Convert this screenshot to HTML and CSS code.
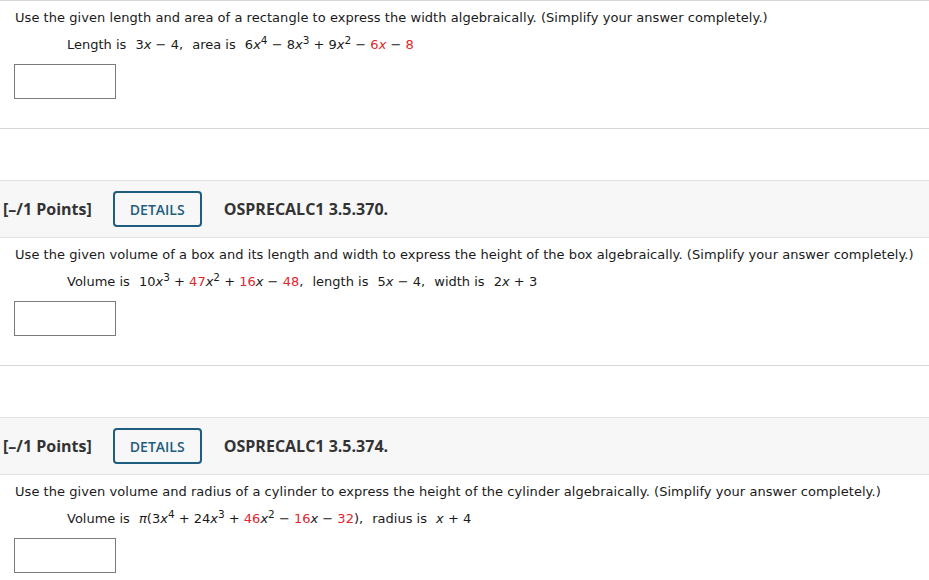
FILE: index.html
```html
<!DOCTYPE html>
<html>
<head>
<meta charset="utf-8">
<link rel="stylesheet" href="styles.css">
</head>
<body>
<div class="page">
  <div class="content first">
    <p class="prompt">Use the given length and area of a rectangle to express the width algebraically. (Simplify your answer completely.)</p>
    <p class="given">Length is <span class="m">3<i>x</i> − 4</span><span class="comma">,</span> area is <span class="m">6<i>x</i><sup>4</sup> − 8<i>x</i><sup>3</sup> + 9<i>x</i><sup>2</sup> − <span class="r">6</span><i class="r">x</i> − <span class="r">8</span></span></p>
    <div class="answer"></div>
  </div>

  <div class="header">
    <span class="points">[–/1 Points]</span>
    <span class="details">DETAILS</span>
    <span class="code">OSPRECALC1 3.5.370.</span>
  </div>
  <div class="content">
    <p class="prompt">Use the given volume of a box and its length and width to express the height of the box algebraically. (Simplify your answer completely.)</p>
    <p class="given">Volume is <span class="m">10<i>x</i><sup>3</sup> + <span class="r">47</span><i>x</i><sup>2</sup> + <span class="r">16</span><i>x</i> − <span class="r">48</span></span><span class="comma">,</span> length is <span class="m">5<i>x</i> − 4</span><span class="comma">,</span> width is <span class="m">2<i>x</i> + 3</span></p>
    <div class="answer"></div>
  </div>

  <div class="header">
    <span class="points">[–/1 Points]</span>
    <span class="details">DETAILS</span>
    <span class="code">OSPRECALC1 3.5.374.</span>
  </div>
  <div class="content">
    <p class="prompt">Use the given volume and radius of a cylinder to express the height of the cylinder algebraically. (Simplify your answer completely.)</p>
    <p class="given">Volume is <span class="m"><i>π</i>(3<i>x</i><sup>4</sup> + 24<i>x</i><sup>3</sup> + <span class="r">46</span><i>x</i><sup>2</sup> − <span class="r">16</span><i>x</i> − <span class="r">32</span>)</span><span class="comma">,</span> radius is <span class="m"><i>x</i> + 4</span></p>
    <div class="answer"></div>
  </div>
</div>
</body>
</html>
```

FILE: styles.css
```css
html, body {
  margin: 0;
  padding: 0;
  background: #ffffff;
}

.page {
  font-family: "DejaVu Sans", Verdana, sans-serif;
  font-size: 13px;
  color: #1a1a1a;
}

.content {
  padding: 8px 0 29px 14px;
  border-bottom: 1px solid #d6d6d6;
  margin-bottom: 51px;
}

.content.first {
  border-top: 1px solid #d6d6d6;
}

.content:last-child {
  border-bottom: none;
  margin-bottom: 0;
}

.prompt {
  margin: 0 0 9px 1px;
  line-height: 18px;
  white-space: nowrap;
  letter-spacing: 0.05px;
}

.given {
  margin: 0 0 0 53px;
  line-height: 18px;
  white-space: nowrap;
}

.m {
  margin: 0 0 0 5px;
}

.m i {
  font-style: italic;
}

.m sup {
  font-size: 10.5px;
  line-height: 0;
  vertical-align: 5px;
}

.comma {
  margin-right: 5px;
}

.r {
  color: #e0262e;
}

.answer {
  margin-top: 10px;
  width: 100px;
  height: 33px;
  border: 1px solid #7b7b7b;
  background: #fff;
}

.header {
  display: flex;
  align-items: center;
  height: 56px;
  background: #f7f7f7;
  border-top: 1px solid #e2e2e2;
  border-bottom: 1px solid #e2e2e2;
  padding-left: 3px;
  font-family: "Open Sans", sans-serif;
  color: #333333;
}

.points {
  font-weight: 700;
  font-size: 16px;
  margin-right: 21px;
}

.details {
  box-sizing: border-box;
  width: 89px;
  height: 36px;
  border: 2px solid #1f5d80;
  border-radius: 4px;
  color: #1f5d80;
  font-size: 14px;
  font-weight: 600;
  display: flex;
  align-items: center;
  justify-content: center;
  margin-right: 22px;
}

.code {
  font-weight: 700;
  font-size: 16px;
}
```
